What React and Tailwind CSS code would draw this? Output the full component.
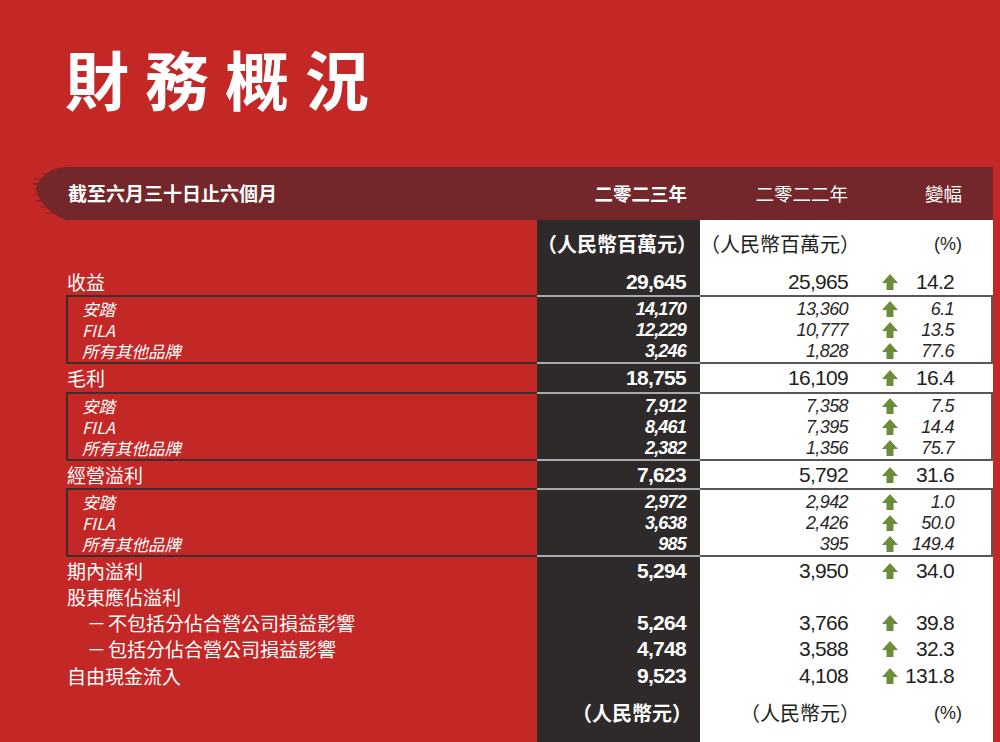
import React from 'react';

const CJK = "font-['Noto_Sans_CJK_TC','Noto_Sans_CJK_SC',sans-serif]";
const NUM = "font-['Liberation_Sans','Noto_Sans_CJK_TC',Arial,sans-serif]";
const COLS = 'grid grid-cols-[471px_163px_293px]';

function Arrow() {
  return (
    <svg width="16" height="16" viewBox="0 0 16 16" className="block">
      <polygon points="8,0 16,9 11.5,9 11.5,16 4.5,16 4.5,9 0,9" fill="#6b8d3a" />
    </svg>
  );
}

function Brush() {
  return (
    <svg className="ml-[33px] block h-[53px] w-[33px] shrink-0" viewBox="0 0 33 53" preserveAspectRatio="none">
      <polygon
        points="33,0 27,1 22,2 17,4 13,7 10,10 7,13 5,17 3,21 4,26 6,30 8,34 11,38 15,42 20,46 26,50 33,53"
        fill="#73272a"
      />
      <rect x="1" y="11" width="12" height="1.5" fill="#73272a" opacity="0.8" />
      <rect x="0" y="16" width="9" height="2" fill="#73272a" opacity="0.7" />
      <rect x="2" y="22" width="6" height="1.5" fill="#73272a" opacity="0.8" />
      <rect x="0" y="27" width="8" height="1" fill="#73272a" opacity="0.6" />
      <rect x="3" y="33" width="9" height="2" fill="#73272a" opacity="0.7" />
      <rect x="7" y="39" width="10" height="1.5" fill="#73272a" opacity="0.7" />
      <rect x="12" y="45" width="10" height="1.5" fill="#73272a" opacity="0.6" />
      <rect x="8" y="6" width="12" height="1" fill="#73272a" opacity="0.6" />
    </svg>
  );
}

function MainRow({ h, label, a, b, c, indent }) {
  return (
    <div className={`${COLS} ${h}`}>
      <div className={`flex items-center text-[19px] leading-[20px] text-white ${CJK} ${indent ? 'pl-[21px]' : 'pl-[1px]'}`}>
        {indent ? (
          <>
            <span>－</span>
            <span className="ml-[2px]">{label}</span>
          </>
        ) : (
          label
        )}
      </div>
      <div className={`flex items-center justify-end bg-[#2e2a2a] pr-[14px] text-[21px] font-bold leading-[20px] tracking-[-0.7px] text-white ${NUM}`}>
        {a}
      </div>
      <div className={`flex items-center bg-white text-[21px] leading-[20px] tracking-[-0.7px] text-[#231f20] ${NUM}`}>
        <span className="w-[148px] text-right">{b}</span>
        <span className="ml-[34px] w-[16px]">{c ? <Arrow /> : null}</span>
        <span className="w-[56px] text-right">{c}</span>
      </div>
    </div>
  );
}

function Group({ subs }) {
  return (
    <div className={COLS}>
      <div className={`border-2 border-r-0 border-[#3e2d2d] py-px pl-[14px] ${CJK}`}>
        {subs.map((s) => (
          <div key={s[0]} className="flex h-[21px] items-center text-[16.5px] leading-[18px] italic text-white">
            {s[0]}
          </div>
        ))}
      </div>
      <div className={`border-y-2 border-[#a9a9a9] bg-[#2e2a2a] py-px pr-[14px] ${NUM}`}>
        {subs.map((s) => (
          <div key={s[0]} className="flex h-[21px] items-center justify-end text-[18px] font-bold italic leading-[18px] tracking-[-0.8px] text-white">
            {s[1]}
          </div>
        ))}
      </div>
      <div className={`border-2 border-l-0 border-[#5b5555] bg-white py-px ${NUM}`}>
        {subs.map((s) => (
          <div key={s[0]} className="flex h-[21px] items-center text-[18px] italic leading-[18px] tracking-[-0.6px] text-[#2b2727]">
            <span className="w-[148px] text-right">{s[2]}</span>
            <span className="ml-[34px] w-[16px]">
              <Arrow />
            </span>
            <span className="w-[56px] text-right">{s[3]}</span>
          </div>
        ))}
      </div>
    </div>
  );
}

function UnitsRow({ dark, light }) {
  return (
    <div className={`${COLS} h-[48px]`}>
      <div />
      <div className={`flex items-center justify-end bg-[#2e2a2a] pr-[8px] text-[20px] font-bold leading-[22px] text-white ${CJK}`}>
        {dark}
      </div>
      <div className="flex items-center bg-white text-[#231f20]">
        <span className={`w-[160px] text-right text-[20px] leading-[22px] ${CJK}`}>{light}</span>
        <span className={`flex-1 pr-[31px] text-right text-[18px] leading-[22px] ${NUM}`}>(%)</span>
      </div>
    </div>
  );
}

const groups = [
  {
    h: 'h-[27px]',
    label: '收益',
    v: ['29,645', '25,965', '14.2'],
    subs: [
      ['安踏', '14,170', '13,360', '6.1'],
      ['FILA', '12,229', '10,777', '13.5'],
      ['所有其他品牌', '3,246', '1,828', '77.6'],
    ],
  },
  {
    h: 'h-[28px]',
    label: '毛利',
    v: ['18,755', '16,109', '16.4'],
    subs: [
      ['安踏', '7,912', '7,358', '7.5'],
      ['FILA', '8,461', '7,395', '14.4'],
      ['所有其他品牌', '2,382', '1,356', '75.7'],
    ],
  },
  {
    h: 'h-[27px]',
    label: '經營溢利',
    v: ['7,623', '5,792', '31.6'],
    subs: [
      ['安踏', '2,972', '2,942', '1.0'],
      ['FILA', '3,638', '2,426', '50.0'],
      ['所有其他品牌', '985', '395', '149.4'],
    ],
  },
];

export default function App() {
  return (
    <div className="relative h-[742px] w-[1000px] overflow-hidden bg-[#c32826]">
      <div className="h-[167px] pl-[65px] pt-[41px]">
        <h1 className={`text-[64px] font-bold leading-[72px] tracking-[16px] text-white ${CJK}`}>財務概況</h1>
      </div>

      <div className="flex h-[53px]">
        <Brush />
        <div className={`${COLS} w-[927px] bg-[#73272a] text-white ${CJK}`}>
          <div className="flex items-center pl-[2px] text-[19px] font-bold">截至六月三十日止六個月</div>
          <div className="flex items-center justify-end pr-[13px] text-[18.5px] font-bold">二零二三年</div>
          <div className="flex items-center">
            <span className="w-[148px] text-right text-[18.5px]">二零二二年</span>
            <span className="flex-1 pr-[31px] text-right text-[18.5px]">變幅</span>
          </div>
        </div>
      </div>

      <div className="pl-[66px]">
        <UnitsRow dark="（人民幣百萬元）" light="（人民幣百萬元）" />
        {groups.map((g) => (
          <React.Fragment key={g.label}>
            <MainRow h={g.h} label={g.label} a={g.v[0]} b={g.v[1]} c={g.v[2]} />
            <Group subs={g.subs} />
          </React.Fragment>
        ))}
        <MainRow h="h-[27px]" label="期內溢利" a="5,294" b="3,950" c="34.0" />
        <MainRow h="h-[26px]" label="股東應佔溢利" a="" b="" c="" />
        <MainRow h="h-[26px]" label="不包括分佔合營公司損益影響" a="5,264" b="3,766" c="39.8" indent />
        <MainRow h="h-[26px]" label="包括分佔合營公司損益影響" a="4,748" b="3,588" c="32.3" indent />
        <MainRow h="h-[27px]" label="自由現金流入" a="9,523" b="4,108" c="131.8" />
        <UnitsRow dark="（人民幣元）" light="（人民幣元）" />
        <MainRow h="h-[30px]" label="每股盈利" a="" b="" c="" />
      </div>
    </div>
  );
}
